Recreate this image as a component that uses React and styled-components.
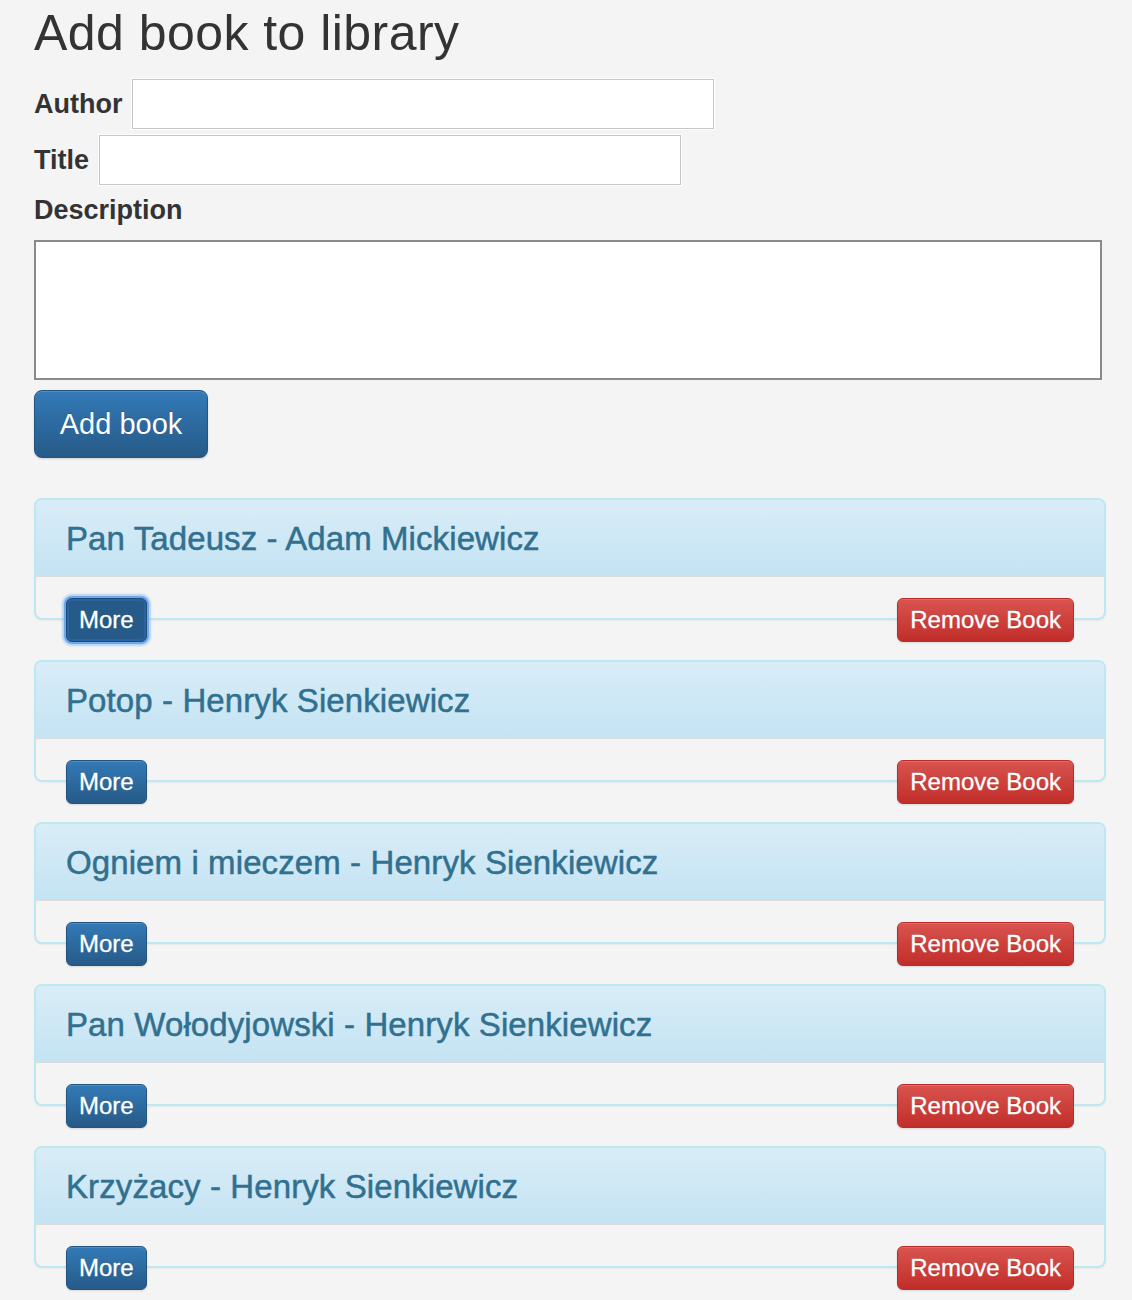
import React from 'react';
import styled, { createGlobalStyle, css } from 'styled-components';

const books = [
	{ id: 1, title: 'Pan Tadeusz', author: 'Adam Mickiewicz' },
	{ id: 2, title: 'Potop', author: 'Henryk Sienkiewicz' },
	{ id: 3, title: 'Ogniem i mieczem', author: 'Henryk Sienkiewicz' },
	{ id: 4, title: 'Pan Wołodyjowski', author: 'Henryk Sienkiewicz' },
	{ id: 5, title: 'Krzyżacy', author: 'Henryk Sienkiewicz' },
];

function App() {
	return (
		<>
			<GlobalStyle />
			<Page>
				<Heading>Add book to library</Heading>
				<FieldRow first>
					<Label htmlFor="author">Author</Label>
					<TextInput id="author" type="text" />
				</FieldRow>
				<FieldRow>
					<Label htmlFor="title">Title</Label>
					<TextInput id="title" type="text" />
				</FieldRow>
				<BlockLabel htmlFor="description">Description</BlockLabel>
				<Description id="description" />
				<AddButton>Add book</AddButton>

				<BookList>
					{books.map((book, i) => (
						<Panel key={book.id}>
							<PanelHeading>
								<PanelTitle>{book.title} - {book.author}</PanelTitle>
							</PanelHeading>
							<PanelBody>
								<Actions>
									<SmallButton variant="primary" focused={i === 0}>More</SmallButton>
									<SmallButton variant="danger">Remove Book</SmallButton>
								</Actions>
							</PanelBody>
						</Panel>
					))}
				</BookList>
			</Page>
		</>
	);
}

const GlobalStyle = createGlobalStyle`
	body {
		margin: 0;
		background: #f4f4f4;
		color: #333;
		font-family: "Liberation Sans", Arial, Helvetica, sans-serif;
	}
`;

const Page = styled.div`
	width: 1072px;
	padding: 0 34px 40px;
`;

const Heading = styled.h1`
	margin: 6px 0 0;
	font-size: 50px;
	font-weight: 400;
	line-height: 1.1;
	color: #333;
	letter-spacing: 0.45px;
`;

const FieldRow = styled.div`
	display: flex;
	align-items: center;
	gap: 10px;
	margin-top: ${p => (p.first ? '18px' : '6px')};
`;

const Label = styled.label`
	font-size: 27px;
	font-weight: 700;
	color: #333;
`;

const BlockLabel = styled(Label)`
	display: block;
	margin-top: 6px;
	line-height: 38px;
`;

const TextInput = styled.input`
	box-sizing: border-box;
	width: 582px;
	height: 50px;
	border: 1px solid #c6c6c6;
	box-shadow: 0 0 0 1px #fff;
	background: #fff;
	outline: none;
`;

const Description = styled.textarea`
	display: block;
	box-sizing: border-box;
	width: 1068px;
	height: 140px;
	margin-top: 11px;
	border: 2px solid #8a8a8a;
	background: #fff;
	resize: none;
	outline: none;
`;

const btnColors = {
	primary: css`
		background-image: linear-gradient(to bottom, #337ab7 0%, #265a88 100%);
		border-color: #245580;
	`,
	danger: css`
		background-image: linear-gradient(to bottom, #d9534f 0%, #c12e2a 100%);
		border-color: #b92c28;
	`,
};

const AddButton = styled.button`
	display: block;
	box-sizing: border-box;
	width: 174px;
	height: 68px;
	margin-top: 10px;
	padding: 0;
	border: 1px solid #245580;
	border-radius: 8px;
	background-image: linear-gradient(to bottom, #337ab7 0%, #265a88 100%);
	box-shadow: inset 0 1px 0 rgba(255, 255, 255, 0.15), 0 1px 2px rgba(0, 0, 0, 0.15);
	color: #fff;
	font-family: inherit;
	font-size: 29px;
	text-shadow: 0 -1px 0 rgba(0, 0, 0, 0.2);
`;

const BookList = styled.div`
	margin-top: 40px;
`;

const Panel = styled.div`
	margin-bottom: 40px;
	border: 2px solid #bce8f1;
	border-radius: 8px;
	box-shadow: 0 1px 2px rgba(0, 0, 0, 0.05);
`;

const PanelHeading = styled.div`
	padding: 21px 30px 18px;
	border-bottom: 2px solid #dcdcdc;
	border-radius: 6px 6px 0 0;
	background-image: linear-gradient(to bottom, #d9edf7 0%, #c4e3f3 100%);
`;

const PanelTitle = styled.h3`
	margin: 0;
	font-size: 33px;
	font-weight: 400;
	line-height: 36px;
	letter-spacing: 0.1px;
	color: #31708f;
	-webkit-text-stroke: 0.5px #31708f;
`;

const PanelBody = styled.div`
	padding: 21px 30px 20px;
`;

const Actions = styled.div`
	display: flex;
	justify-content: space-between;
	align-items: flex-start;
	height: 0;
`;

const SmallButton = styled.button`
	flex: none;
	box-sizing: border-box;
	height: 44px;
	padding: 0 12px;
	border: 1px solid;
	border-radius: 6px;
	${p => btnColors[p.variant]}
	box-shadow: inset 0 1px 0 rgba(255, 255, 255, 0.15), 0 1px 2px rgba(0, 0, 0, 0.12);
	color: #fff;
	font-family: inherit;
	font-size: 24px;
	line-height: 1;
	text-shadow: 0 -1px 0 rgba(0, 0, 0, 0.2);
	-webkit-text-stroke: 0.3px #fff;

	${p => p.focused && css`
		background-image: none;
		background-color: #265a88;
		border-color: #204d74;
		box-shadow: inset 0 0 0 2px #2a64a0, 0 0 0 2px #6ea8ee, 0 0 2px 4px rgba(110, 168, 238, 0.45);
	`}
`;

export default App;
